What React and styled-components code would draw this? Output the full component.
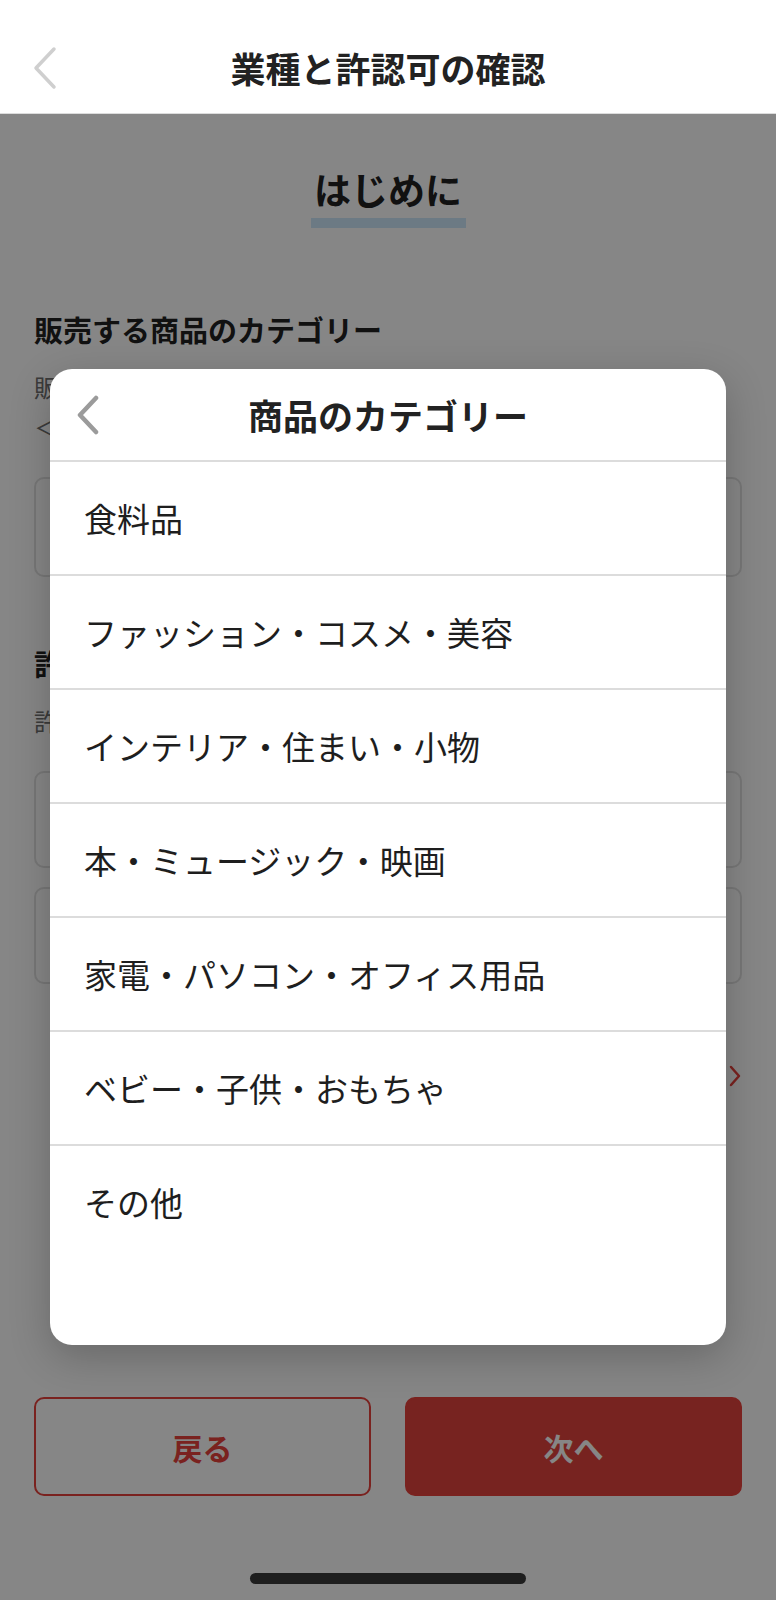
import React from 'react'
import styled, { createGlobalStyle } from 'styled-components'

const GlobalStyle = createGlobalStyle`
  body {
    margin: 0;
    font-family: "Noto Sans CJK JP", "Noto Sans", sans-serif;
    color: #222;
  }
`

const categories = [
  '食料品',
  'ファッション・コスメ・美容',
  'インテリア・住まい・小物',
  '本・ミュージック・映画',
  '家電・パソコン・オフィス用品',
  'ベビー・子供・おもちゃ',
  'その他',
]

const App = () => {
  return (
    <>
      <GlobalStyle />
      <Page>
        <Header>
          <BackButton aria-label="戻る">
            <svg width="24" height="44" viewBox="0 0 24 44">
              <polyline points="21,3 3,22 21,41" fill="none" stroke="#cfcfcf" strokeWidth="3.5" strokeLinecap="round" strokeLinejoin="round" />
            </svg>
          </BackButton>
          <HeaderTitle>業種と許認可の確認</HeaderTitle>
          <span />
        </Header>

        <Content>
          <IntroTitle>
            <span>はじめに</span>
            <Underline />
          </IntroTitle>

          <Section>
            <SectionHeading>販売する商品のカテゴリー</SectionHeading>
            <Description>
              販売する商品<br />
              ＜例＞
            </Description>
            <SelectBox />
          </Section>

          <Section $first={false}>
            <SectionHeading>許認可の有無</SectionHeading>
            <Description>許認可</Description>
            <Fields>
              <SelectBox $small />
              <SelectBox $small />
            </Fields>
          </Section>

          <LinkRow>
            <svg width="14" height="22" viewBox="0 0 14 22" aria-label="許認可について">
              <polyline points="3,2 11,11 3,20" fill="none" stroke="#e8413c" strokeWidth="2.5" strokeLinecap="round" strokeLinejoin="round" />
            </svg>
          </LinkRow>

          <ButtonRow>
            <Button $variant="outline">戻る</Button>
            <Button $variant="filled">次へ</Button>
          </ButtonRow>
        </Content>

        <Overlay>
          <Modal>
            <ModalHeader>
              <ModalBack aria-label="閉じる">
                <svg width="24" height="40" viewBox="0 0 24 40">
                  <polyline points="20,3 4,20 20,37" fill="none" stroke="#9b9b9b" strokeWidth="4.5" strokeLinecap="round" strokeLinejoin="round" />
                </svg>
              </ModalBack>
              <ModalTitle>商品のカテゴリー</ModalTitle>
              <span />
            </ModalHeader>
            <CategoryList>
              {categories.map((c, i) => (
                <CategoryItem key={i}>{c}</CategoryItem>
              ))}
            </CategoryList>
          </Modal>
        </Overlay>

        <HomeIndicator />
      </Page>
    </>
  )
}

const Page = styled.div`
  position: relative;
  width: 776px;
  height: 1600px;
  overflow: hidden;
  background: #fff;
`

const Header = styled.header`
  display: grid;
  grid-template-columns: 1fr auto 1fr;
  align-items: center;
  height: 90px;
  padding-top: 23px;
  border-bottom: 1px solid #dcdcdc;
  background: #fff;
`

const BackButton = styled.button`
  justify-self: start;
  display: flex;
  align-items: center;
  margin-left: 33px;
  padding: 0;
  border: none;
  background: none;
`

const HeaderTitle = styled.h1`
  margin: 0;
  font-size: 35px;
  font-weight: 700;
  line-height: 1.2;
  color: #222;
`

const Content = styled.main`
  padding: 0 34px;
`

const IntroTitle = styled.h2`
  display: flex;
  flex-direction: column;
  align-items: center;
  margin: 54px 0 0;
  font-size: 37px;
  font-weight: 700;
  line-height: 43px;
  color: #222;
`

const Underline = styled.div`
  width: 155px;
  height: 10px;
  margin-top: 7px;
  background: #cde8fb;
`

const Section = styled.section`
  margin-top: ${(p) => (p.$first === false ? '66px' : '81px')};
`

const SectionHeading = styled.h3`
  margin: 0 0 18px;
  font-size: 29px;
  font-weight: 700;
  line-height: 40px;
  color: #222;
`

const Description = styled.p`
  margin: 0 0 30px;
  font-size: 24px;
  line-height: 40px;
  color: #707070;
`

const Fields = styled.div`
  display: flex;
  flex-direction: column;
  gap: 19px;
`

const SelectBox = styled.div`
  height: ${(p) => (p.$small ? '93px' : '96px')};
  border: 2px solid #e2e2e2;
  border-radius: 10px;
  background: #fff;
`

const LinkRow = styled.div`
  display: flex;
  justify-content: flex-end;
  align-items: center;
  height: 40px;
  margin-top: 72px;
`

const ButtonRow = styled.div`
  display: grid;
  grid-template-columns: 1fr 1fr;
  gap: 34px;
  margin-top: 301px;
`

const Button = styled.button`
  height: 99px;
  border-radius: 10px;
  font-family: inherit;
  font-size: 30px;
  font-weight: 700;
  border: 2px solid #e8413c;
  color: ${(p) => (p.$variant === 'filled' ? '#fff' : '#e8413c')};
  background: ${(p) => (p.$variant === 'filled' ? '#e3433d' : '#fff')};
`

const Overlay = styled.div`
  position: absolute;
  top: 114px;
  left: 0;
  right: 0;
  bottom: 0;
  display: flex;
  align-items: center;
  justify-content: center;
  background: rgba(0, 0, 0, 0.475);
`

const Modal = styled.div`
  display: flex;
  flex-direction: column;
  width: 676px;
  height: 976px;
  border-radius: 22px;
  background: #fff;
  box-shadow: 0 12px 40px rgba(0, 0, 0, 0.22);
  overflow: hidden;
`

const ModalHeader = styled.div`
  display: grid;
  grid-template-columns: 100px 1fr 100px;
  align-items: center;
  height: 91px;
  border-bottom: 2px solid #dcdcdc;
`

const ModalBack = styled.button`
  justify-self: start;
  display: flex;
  margin-left: 26px;
  padding: 0;
  border: none;
  background: none;
`

const ModalTitle = styled.h2`
  margin: 0;
  text-align: center;
  font-size: 35px;
  font-weight: 700;
  line-height: 1.2;
  color: #222;
`

const CategoryList = styled.ul`
  margin: 0;
  padding: 0;
  list-style: none;
`

const CategoryItem = styled.li`
  display: flex;
  align-items: center;
  height: 112px;
  padding-left: 34px;
  font-size: 33px;
  color: #1e1e1e;
  border-bottom: 2px solid #dcdcdc;

  &:last-child {
    border-bottom: none;
  }
`

const HomeIndicator = styled.div`
  position: absolute;
  left: 50%;
  bottom: 16px;
  width: 276px;
  height: 11px;
  margin-left: -138px;
  border-radius: 6px;
  background: #1e1e1e;
`

export default App
